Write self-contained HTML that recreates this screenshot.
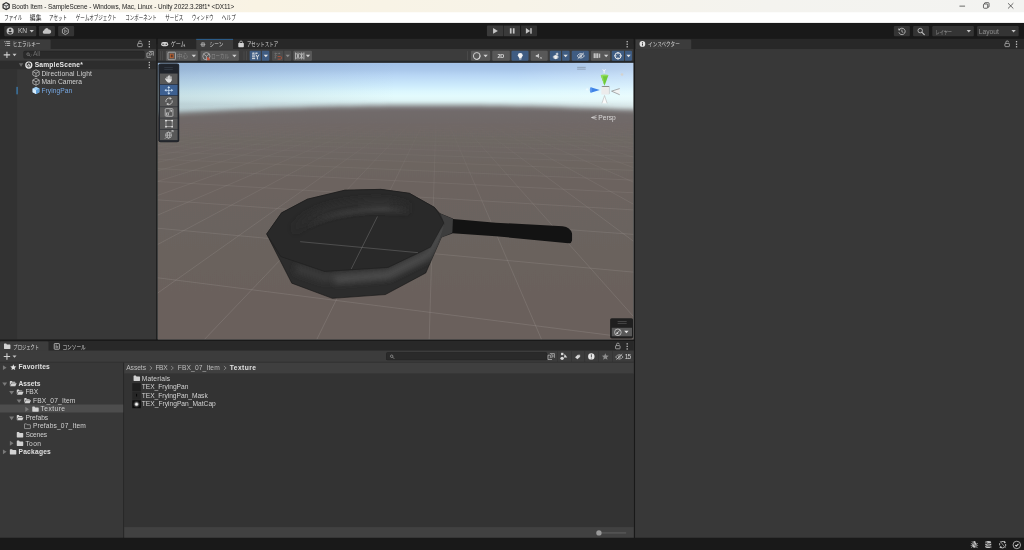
<!DOCTYPE html>
<html lang="ja">
<head>
<meta charset="utf-8">
<title>Booth Item - SampleScene - Unity</title>
<style>
html,body{margin:0;padding:0;width:1024px;height:550px;overflow:hidden;background:#383838}
#root{position:absolute;left:0;top:0;width:1920px;height:1032px;transform-origin:0 0;transform:scale(.533333,.53295);
 font-family:"Liberation Sans",sans-serif;font-size:12px;color:#d2d2d2;overflow:hidden;background:#383838}
.a{position:absolute}
.t{position:absolute;white-space:nowrap;line-height:16px;height:16px}
.j{font-family:"Liberation Sans","Noto Sans CJK JP",sans-serif;transform-origin:0 50%}
.b{font-weight:bold}
svg{overflow:visible}
.btn{position:absolute;background:#585858;border-radius:2px}
.btnb{position:absolute;background:#46607c;border-radius:2px}
.tb{position:absolute;background:#343434;border-radius:2px}
</style>
</head>
<body>
<div id="root">
<div class="a" style="left:0;top:0;width:1920px;height:30px;background:linear-gradient(90deg,#f4f2ec 0,#f9f3e4 25%,#f7f3e8 50%,#f4f3ef 75%,#f3f3f1 100%)"></div>
<svg class="a" style="left:3px;top:3px" width="17" height="17" viewBox="0 0 17 17"><path d="M8.5 0.8 15.4 4.6V12.4L8.5 16.2 1.6 12.4V4.6Z" fill="#2b2b2b"/><path d="M8.5 3.2 12.6 5.6 8.5 8 4.4 5.6Z M3.9 6.6 7.9 9V13.6L3.9 11.2Z M13.1 6.6 9.1 9V13.6L13.1 11.2Z" fill="#e8e8e8"/></svg>
<div class="t" style="left:22.6px;top:4.0px;font-size:12px;letter-spacing:-0.089px;color:#1b1b1b;">Booth Item - SampleScene - Windows, Mac, Linux - Unity 2022.3.28f1* &lt;DX11&gt;</div>
<svg class="a" style="left:1780px;top:0" width="140" height="23" viewBox="0 0 140 23"><g stroke="#1a1a1a" stroke-width="1.2" fill="none"><path d="M19 11.5H29.5"/><rect x="64" y="7.5" width="8" height="8" rx="1.5"/><path d="M66 7.5V6.5Q66 5 67.5 5H73Q74.5 5 74.5 6.5V12Q74.5 13.5 73 13.5H72"/><path d="M110 6 120 16M120 6 110 16"/></g></svg>
<div class="a" style="left:0;top:23px;width:1920px;height:28px;background:#fff"></div>
<div class="t j" style="left:7.5px;top:25px;font-size:12px;color:#1c1c1c;transform:scaleX(.70)">ファイル</div>
<div class="t j" style="left:55.5px;top:25px;font-size:12px;color:#1c1c1c;transform:scaleX(.90)">編集</div>
<div class="t j" style="left:92.3px;top:25px;font-size:12px;color:#1c1c1c;transform:scaleX(.70)">アセット</div>
<div class="t j" style="left:141.5px;top:25px;font-size:12px;color:#1c1c1c;transform:scaleX(.71)">ゲームオブジェクト</div>
<div class="t j" style="left:234.6px;top:25px;font-size:12px;color:#1c1c1c;transform:scaleX(.70)">コンポーネント</div>
<div class="t j" style="left:310.4px;top:25px;font-size:12px;color:#1c1c1c;transform:scaleX(.70)">サービス</div>
<div class="t j" style="left:359.6px;top:25px;font-size:12px;color:#1c1c1c;transform:scaleX(.67)">ウィンドウ</div>
<div class="t j" style="left:415.8px;top:25px;font-size:12px;color:#1c1c1c;transform:scaleX(.73)">ヘルプ</div>
<div class="a" style="left:0;top:43px;width:1920px;height:40px;background:#191919"></div>
<div class="tb" style="left:8.0px;top:48.5px;width:59.5px;height:19.0px;"></div>
<div class="tb" style="left:73.0px;top:48.5px;width:30.0px;height:19.0px;"></div>
<div class="tb" style="left:108.6px;top:48.5px;width:30.0px;height:19.0px;"></div>
<svg class="a" style="left:12px;top:51px" width="14" height="14" viewBox="0 0 14 14"><circle cx="7" cy="7" r="6.6" fill="#c4c4c4"/><circle cx="7" cy="5.2" r="2.2" fill="#383838"/><path d="M2.8 10.6Q7 6.6 11.2 10.6Q7 14 2.8 10.6Z" fill="#383838"/></svg>
<div class="t" style="left:33.6px;top:50.0px;font-size:12.5px;letter-spacing:-0.375px;color:#c4c4c4;">KN</div>
<svg class="a" style="left:55px;top:55.5px" width="9" height="6" viewBox="0 0 9 6"><path d="M0.5 0.5H8.5L4.5 5.2Z" fill="#c4c4c4"/></svg>
<svg class="a" style="left:79px;top:51px" width="18" height="14" viewBox="0 0 18 14"><path d="M4.2 12.5A3.4 3.4 0 0 1 3.8 5.8A4.6 4.6 0 0 1 12.6 4.6A4 4 0 0 1 13.8 12.5Z" fill="#c4c4c4"/></svg>
<svg class="a" style="left:115px;top:50.5px" width="15" height="15" viewBox="0 0 15 15"><path d="M7.5 1 13 4.2V10.8L7.5 14 2 10.8V4.2Z" fill="none" stroke="#c4c4c4" stroke-width="1.4" stroke-linejoin="round"/><path d="M6 4.8 10.2 7.5 6 10.2Z" fill="none" stroke="#c4c4c4" stroke-width="1"/></svg>
<div class="tb" style="left:913.0px;top:48.0px;width:30.6px;height:19.5px;border-radius:2px 0 0 2px;background:#3a3a3a"></div>
<div class="tb" style="left:945.0px;top:48.0px;width:30.3px;height:19.5px;border-radius:0;background:#3a3a3a"></div>
<div class="tb" style="left:976.6px;top:48.0px;width:30.4px;height:19.5px;border-radius:0 2px 2px 0;background:#303030"></div>
<svg class="a" style="left:913px;top:48px" width="94" height="20" viewBox="0 0 94 20"><g fill="#c4c4c4"><path d="M11.5 4.5 20.5 10 11.5 15.5Z"/><rect x="43" y="5" width="3.2" height="10"/><rect x="48.6" y="5" width="3.2" height="10"/><path d="M73 4.5 81 10 73 15.5Z"/><rect x="81.3" y="4.8" width="2.6" height="10.4"/></g></svg>
<div class="tb" style="left:1676.0px;top:49.0px;width:30.0px;height:18.5px;"></div>
<div class="tb" style="left:1712.0px;top:49.0px;width:30.0px;height:18.5px;"></div>
<div class="tb" style="left:1748.0px;top:49.0px;width:78.0px;height:18.5px;"></div>
<div class="tb" style="left:1832.0px;top:49.0px;width:78.0px;height:18.5px;"></div>
<svg class="a" style="left:1683px;top:50.5px" width="16" height="16" viewBox="0 0 16 16"><g fill="none" stroke="#c4c4c4" stroke-width="1.5"><path d="M3.2 4.6A6 6 0 1 1 2.4 9.6"/><path d="M8 4.6V8.4L10.6 10"/></g><path d="M0.8 2.6 5.6 3.2 2.6 7Z" fill="#c4c4c4"/></svg>
<svg class="a" style="left:1719px;top:50.5px" width="16" height="16" viewBox="0 0 16 16"><circle cx="6.4" cy="6.4" r="4.2" fill="none" stroke="#c4c4c4" stroke-width="1.6"/><path d="M9.6 9.6 14 14" stroke="#c4c4c4" stroke-width="2.2" stroke-linecap="round"/></svg>
<div class="t j" style="left:1753.5px;top:50.8px;font-size:11.5px;color:#c4c4c4;opacity:.68;transform:scaleX(.68)">レイヤー</div>
<svg class="a" style="left:1812px;top:56px" width="9" height="6" viewBox="0 0 9 6"><path d="M0.5 0.5H8.5L4.5 5.2Z" fill="#c4c4c4"/></svg>
<div class="t" style="left:1835.0px;top:50.5px;font-size:12.5px;letter-spacing:0.094px;color:#c4c4c4;opacity:.62">Layout</div>
<svg class="a" style="left:1896px;top:56px" width="9" height="6" viewBox="0 0 9 6"><path d="M0.5 0.5H8.5L4.5 5.2Z" fill="#c4c4c4"/></svg>
<div class="a" style="left:0;top:73px;width:293px;height:564px;background:#383838"></div>
<div class="a" style="left:0;top:73px;width:293px;height:18.5px;background:#282828"></div>
<div class="a" style="left:0;top:73.5px;width:95px;height:18px;background:#3c3c3c;border-radius:2px 2px 0 0"></div>
<svg class="a" style="left:8px;top:77px" width="11" height="10" viewBox="0 0 11 10"><g fill="#c4c4c4"><rect x="0" y="0.5" width="2" height="1.6"/><rect x="3" y="0.5" width="8" height="1.6"/><rect x="2" y="4" width="2" height="1.6"/><rect x="5" y="4" width="6" height="1.6"/><rect x="2" y="7.5" width="2" height="1.6"/><rect x="5" y="7.5" width="6" height="1.6"/></g></svg>
<div class="t j" style="left:23.5px;top:75.3px;font-size:11.5px;color:#d2d2d2;transform:scaleX(.75)">ヒエラルキー</div>
<svg class="a" style="left:257px;top:76px" width="11" height="12" viewBox="0 0 11 12"><path d="M3 5.5V3.6A2.6 2.6 0 0 1 8.2 3.2" fill="none" stroke="#c4c4c4" stroke-width="1.3"/><rect x="1.2" y="5.5" width="8.4" height="6" rx="1" fill="none" stroke="#c4c4c4" stroke-width="1.3"/></svg>
<svg class="a" style="left:278px;top:76px" width="4" height="14" viewBox="0 0 4 14"><g fill="#c4c4c4"><rect x="0.8" y="1" width="2.4" height="2.4"/><rect x="0.8" y="5.8" width="2.4" height="2.4"/><rect x="0.8" y="10.6" width="2.4" height="2.4"/></g></svg>
<div class="a" style="left:0;top:91.5px;width:293px;height:22px;background:#3c3c3c"></div>
<svg class="a" style="left:7px;top:96px" width="26" height="14" viewBox="0 0 26 14"><path d="M6 1V13M0 7H12" stroke="#d2d2d2" stroke-width="2" fill="none"/><path d="M16.5 5H24L20.2 9.4Z" fill="#c4c4c4"/></svg>
<div class="a" style="left:44px;top:94.5px;width:227px;height:15px;background:#2a2a2a;border-radius:3px;box-shadow:inset 0 0 0 1px #222"></div>
<svg class="a" style="left:49px;top:97.5px" width="12" height="10" viewBox="0 0 12 10"><circle cx="3.6" cy="3.6" r="2.4" fill="none" stroke="#7a7a7a" stroke-width="1.4"/><path d="M5.4 5.4 8 8" stroke="#7a7a7a" stroke-width="1.6"/><path d="M8.5 4.5H11.5L10 6.3Z" fill="#7a7a7a"/></svg>
<div class="t" style="left:62.0px;top:94.0px;font-size:12.5px;letter-spacing:-0.453px;color:#6e6e6e;">All</div>
<svg class="a" style="left:274px;top:95px" width="15" height="14" viewBox="0 0 15 14"><g fill="none" stroke="#c4c4c4" stroke-width="1.3"><path d="M5 1.5H13.5V9.5"/><path d="M9 12.5H1.5V4.5H5"/><circle cx="8.6" cy="6" r="2.4"/><path d="M6.8 7.8 4.6 10"/></g></svg>
<div class="a" style="left:0;top:113.5px;width:293px;height:16px;background:#2d2d2d"></div>
<div class="a" style="left:0;top:129.5px;width:32px;height:507.5px;background:#323232"></div>
<svg class="a" style="left:35px;top:118px" width="9" height="8" viewBox="0 0 9 8"><path d="M0.3 0.8H8.7L4.5 7.4Z" fill="#6a6a6a"/></svg>
<svg class="a" style="left:47px;top:114.5px" width="14" height="14" viewBox="0 0 14 14"><circle cx="7" cy="7" r="6.8" fill="#e6e6e6"/><path d="M7 2 11 4.3V9L7 11.6 3 9V4.3Z" fill="#2d2d2d"/><path d="M7 4 9.3 5.4 7 6.8 4.7 5.4Z M4.3 6.3 6.6 7.7V10.2L4.3 8.8Z M9.7 6.3 7.4 7.7V10.2L9.7 8.8Z" fill="#e6e6e6"/></svg>
<div class="t b" style="left:65.0px;top:113.5px;font-size:12.5px;letter-spacing:0.375px;color:#e8e8e8;">SampleScene*</div>
<svg class="a" style="left:278px;top:115px" width="4" height="14" viewBox="0 0 4 14"><g fill="#c4c4c4"><rect x="0.8" y="1" width="2.4" height="2.4"/><rect x="0.8" y="5.8" width="2.4" height="2.4"/><rect x="0.8" y="10.6" width="2.4" height="2.4"/></g></svg>
<svg class="a" style="left:60.0px;top:130.0px" width="15" height="15" viewBox="0 0 15 15"><g fill="none" stroke="#c8c8c8" stroke-width="1.3" stroke-linejoin="round"><path d="M7.5 1 13.5 4.2V10.8L7.5 14 1.5 10.8V4.2Z"/><path d="M1.5 4.2 7.5 7.4 13.5 4.2M7.5 7.4V14"/></g></svg>
<div class="t" style="left:77.6px;top:129.5px;font-size:12.5px;letter-spacing:0.316px;">Directional Light</div>
<svg class="a" style="left:60.0px;top:146.0px" width="15" height="15" viewBox="0 0 15 15"><g fill="none" stroke="#c8c8c8" stroke-width="1.3" stroke-linejoin="round"><path d="M7.5 1 13.5 4.2V10.8L7.5 14 1.5 10.8V4.2Z"/><path d="M1.5 4.2 7.5 7.4 13.5 4.2M7.5 7.4V14"/></g></svg>
<div class="t" style="left:77.6px;top:145.5px;font-size:12.5px;letter-spacing:0.117px;">Main Camera</div>
<svg class="a" style="left:60px;top:162px" width="15" height="15" viewBox="0 0 15 15"><path d="M7.5 0.8 13.8 4.1V10.9L7.5 14.2 1.2 10.9V4.1Z" fill="#9fd0f5"/><path d="M1.2 4.1 7.5 7.4V14.2L1.2 10.9Z" fill="#d8ecfb"/><path d="M7.5 7.4 13.8 4.1V10.9L7.5 14.2Z" fill="#5f9fd8"/></svg>
<div class="t" style="left:77.6px;top:161.5px;font-size:12.5px;letter-spacing:0.102px;color:#76a7e2;">FryingPan</div>
<div class="a" style="left:31px;top:162.5px;width:2px;height:14px;background:#3f8fd0"></div>
<div class="a" style="left:293px;top:73px;width:3px;height:566px;background:#191919"></div>
<div class="a" style="left:296px;top:73px;width:892.3px;height:564px;background:#383838"></div>
<div class="a" style="left:296px;top:73px;width:892.3px;height:18.5px;background:#282828"></div>
<div class="a" style="left:368px;top:73px;width:68.7px;height:18.5px;background:#3c3c3c"></div>
<div class="a" style="left:368px;top:73px;width:68.7px;height:1.6px;background:#2c5d8a"></div>
<svg class="a" style="left:302px;top:79px" width="13.5" height="8" viewBox="0 0 15 9"><rect x="0" y="0" width="15" height="9" rx="4.5" fill="#d2d2d2"/><rect x="2.2" y="3.6" width="4.4" height="1.6" fill="#282828"/><circle cx="10.8" cy="4.5" r="1.5" fill="#282828"/></svg>
<div class="t j" style="left:319.5px;top:75.3px;font-size:11.5px;color:#d2d2d2;transform:scaleX(.82)">ゲーム</div>
<svg class="a" style="left:376px;top:78.5px" width="9" height="9" viewBox="0 0 11 11"><circle cx="5.5" cy="5.5" r="5.3" fill="#c8c8c8"/><g stroke="#3c3c3c" stroke-width="1" fill="none"><path d="M0 3.6H11M0 7.4H11M3.6 0V11M7.4 0V11"/></g></svg>
<div class="t j" style="left:393px;top:75.3px;font-size:11.5px;color:#d2d2d2;transform:scaleX(.76)">シーン</div>
<svg class="a" style="left:446px;top:76px" width="12" height="13" viewBox="0 0 12 13"><path d="M3.4 5V3.6A2.6 2.6 0 0 1 8.6 3.6V5" fill="none" stroke="#d2d2d2" stroke-width="1.4"/><rect x="0.8" y="4.6" width="10.4" height="8" rx="1.2" fill="#d2d2d2"/></svg>
<div class="t j" style="left:463px;top:75.3px;font-size:11.5px;color:#d2d2d2;transform:scaleX(.73)">アセットストア</div>
<svg class="a" style="left:1174px;top:76px" width="4" height="14" viewBox="0 0 4 14"><g fill="#c4c4c4"><rect x="0.8" y="1" width="2.4" height="2.4"/><rect x="0.8" y="5.8" width="2.4" height="2.4"/><rect x="0.8" y="10.6" width="2.4" height="2.4"/></g></svg>
<div class="a" style="left:296px;top:91.5px;width:892.3px;height:25.2px;background:#3c3c3c"></div>
<div class="a" style="left:296px;top:114.2px;width:892.3px;height:4px;background:#24272b"></div>
<div class="a" style="left:300px;top:96px;width:1px;height:17px;background:#555"></div><div class="a" style="left:303.5px;top:96px;width:1px;height:17px;background:#555"></div>
<div class="a" style="left:311.0px;top:95px;width:60.3px;height:19px;background:#585858;border-radius:2px 2px 2px 2px"></div>
<div class="a" style="left:376.0px;top:95px;width:72.0px;height:19px;background:#585858;border-radius:2px 2px 2px 2px"></div>
<svg class="a" style="left:314px;top:97px" width="16" height="16" viewBox="0 0 16 16"><rect x="1" y="1" width="14" height="14" rx="1.5" fill="none" stroke="#c4c4c4" stroke-width="1.3"/><rect x="5.3" y="4.6" width="5.4" height="6.8" fill="#5a3a2a" stroke="#c4622e" stroke-width="1.5"/></svg>
<div class="t j" style="left:332.4px;top:96.8px;font-size:11.5px;color:#858585;transform:scaleX(.90)">中心</div>
<svg class="a" style="left:358.5px;top:102px" width="9" height="6" viewBox="0 0 9 6"><path d="M0.4 0.5H8.6L4.5 5.4Z" fill="#d2d2d2"/></svg>
<svg class="a" style="left:378.5px;top:96.5px" width="17" height="17" viewBox="0 0 17 17"><g fill="none" stroke="#c4c4c4" stroke-width="1.3"><circle cx="8" cy="8.5" r="6.8"/><path d="M8 8.5 3 4.6M8 8.5 13 4.6M8 8.5V15"/></g><path d="M9.4 10.2H12.4V12.6H14.2V16H9.4Z" fill="#c8503a"/></svg>
<div class="t j" style="left:396px;top:96.8px;font-size:11.5px;color:#8c8c8c;transform:scaleX(.72)">ローカル</div>
<svg class="a" style="left:435.0px;top:102px" width="9" height="6" viewBox="0 0 9 6"><path d="M0.4 0.5H8.6L4.5 5.4Z" fill="#d2d2d2"/></svg>
<div class="a" style="left:457px;top:96px;width:1px;height:17px;background:#555"></div><div class="a" style="left:462px;top:96px;width:1px;height:17px;background:#555"></div>
<div class="a" style="left:468.3px;top:95px;width:21.0px;height:19px;background:#3f5c82;border-radius:2px 0 0 2px"></div>
<div class="a" style="left:490.6px;top:95px;width:14.7px;height:19px;background:#3f5c82;border-radius:0 2px 2px 0"></div>
<svg class="a" style="left:471.5px;top:98px" width="15" height="14" viewBox="0 0 15 14"><g fill="#ececec"><rect x="0.5" y="1" width="1.8" height="1.6"/><rect x="3.4" y="1" width="1.8" height="1.6"/><rect x="6.3" y="1" width="1.8" height="1.6"/><rect x="9.2" y="1" width="1.8" height="1.6"/><rect x="0.5" y="4.4" width="6" height="1.7"/><rect x="0.5" y="7.8" width="6" height="1.7"/><rect x="0.5" y="11.2" width="6" height="1.7"/><rect x="3" y="0.4" width="1.5" height="3"/><rect x="8.6" y="0.4" width="1.5" height="3"/></g><path d="M8 4.6 10.6 9.4 13.4 4.6M10.6 9.4V13.4" fill="none" stroke="#ececec" stroke-width="1.7"/></svg>
<svg class="a" style="left:493.5px;top:102px" width="9" height="6" viewBox="0 0 9 6"><path d="M0.4 0.5H8.6L4.5 5.4Z" fill="#e4e4e4"/></svg>
<div class="a" style="left:510.0px;top:95px;width:21.4px;height:19px;background:#4c4c4c;border-radius:2px 0 0 2px"></div>
<div class="a" style="left:532.6px;top:95px;width:13.0px;height:19px;background:#4c4c4c;border-radius:0 2px 2px 0"></div>
<svg class="a" style="left:513.5px;top:97.5px" width="16" height="15" viewBox="0 0 16 15"><g stroke="#8c8c8c" stroke-width="1.2" fill="none" stroke-dasharray="1.6 1.3"><path d="M1 2.4H12M1 6.4H5M1 10.4H4M2.4 1V12M9.6 1V4"/></g><path d="M6.6 8H11.6A2.5 2.5 0 0 1 11.6 13H6.6" fill="none" stroke="#a8503a" stroke-width="1.8"/></svg>
<svg class="a" style="left:534.8px;top:102px" width="9" height="6" viewBox="0 0 9 6"><path d="M0.4 0.5H8.6L4.5 5.4Z" fill="#8a8a8a"/></svg>
<div class="a" style="left:550.0px;top:95px;width:35.0px;height:19px;background:#585858;border-radius:2px 2px 2px 2px"></div>
<svg class="a" style="left:553px;top:98px" width="18" height="14" viewBox="0 0 18 14"><g stroke="#c6c6c6" fill="none"><path d="M1.2 0.5V13.5M16.8 0.5V13.5" stroke-width="1.6"/><path d="M3 2 8.4 12M8.4 2 3 12M9.6 2 15 12M15 2 9.6 12" stroke-width="1.5"/><path d="M5.7 0.5V13.5M12.3 0.5V13.5" stroke-width="1.3"/></g></svg>
<svg class="a" style="left:573.0px;top:102px" width="9" height="6" viewBox="0 0 9 6"><path d="M0.4 0.5H8.6L4.5 5.4Z" fill="#d2d2d2"/></svg>
<div class="a" style="left:876px;top:96px;width:1px;height:17px;background:#555"></div>
<div class="a" style="left:882.5px;top:95px;width:36.3px;height:19px;background:#585858;border-radius:2px 2px 2px 2px"></div>
<div class="a" style="left:922.5px;top:95px;width:33.0px;height:19px;background:#585858;border-radius:2px 2px 2px 2px"></div>
<div class="a" style="left:959.0px;top:95px;width:32.0px;height:19px;background:#3f5c82;border-radius:2px 2px 2px 2px"></div>
<div class="a" style="left:994.8px;top:95px;width:32.5px;height:19px;background:#585858;border-radius:2px 2px 2px 2px"></div>
<div class="a" style="left:1031.0px;top:95px;width:21.0px;height:19px;background:#3f5c82;border-radius:2px 0 0 2px"></div>
<div class="a" style="left:1053.5px;top:95px;width:14.5px;height:19px;background:#3f5c82;border-radius:0 2px 2px 0"></div>
<div class="a" style="left:1072.3px;top:95px;width:31.7px;height:19px;background:#3f5c82;border-radius:2px 2px 2px 2px"></div>
<div class="a" style="left:1108.0px;top:95px;width:36.3px;height:19px;background:#585858;border-radius:2px 2px 2px 2px"></div>
<div class="a" style="left:1147.3px;top:95px;width:23.1px;height:19px;background:#3f5c82;border-radius:2px 0 0 2px"></div>
<div class="a" style="left:1171.8px;top:95px;width:13.0px;height:19px;background:#3f5c82;border-radius:0 2px 2px 0"></div>
<svg class="a" style="left:886px;top:97px" width="16" height="16" viewBox="0 0 16 16"><circle cx="8" cy="8" r="6.4" fill="none" stroke="#dadada" stroke-width="1.7"/><path d="M12.6 4.4A6.4 6.4 0 0 1 3.4 12.8 5.4 5.4 0 0 0 12.6 4.4Z" fill="#dadada"/></svg>
<svg class="a" style="left:905.5px;top:102px" width="9" height="6" viewBox="0 0 9 6"><path d="M0.4 0.5H8.6L4.5 5.4Z" fill="#d2d2d2"/></svg>
<div class="t b" style="left:932.6px;top:96.5px;font-size:10.3px;letter-spacing:-0.172px;color:#dcdcdc;">2D</div>
<svg class="a" style="left:969.5px;top:98.5px" width="11" height="13" viewBox="0 0 11 13"><circle cx="5.5" cy="4.8" r="4.5" fill="#f4f4f4"/><path d="M3 7.5H8V10.4H3Z" fill="#f4f4f4"/><rect x="3.4" y="11" width="4.2" height="1.5" fill="#f4f4f4"/></svg>
<svg class="a" style="left:1004px;top:99.5px" width="15" height="12" viewBox="0 0 15 12"><path d="M0.6 3.4H3L6.6 0.6V9L3 6.4H0.6Z" fill="#c8c8c8"/><path d="M8.4 6.6 12 10.4M12 6.8 8.4 10.4" stroke="#c8c8c8" stroke-width="1.2"/></svg>
<svg class="a" style="left:1033.5px;top:97px" width="17" height="16" viewBox="0 0 17 16"><g fill="#f0f0f0"><path d="M2 8.5 8 6 14 8.5 8 11Z"/><path d="M2 11.5 8 9.6 14 11.5 8 14.4Z"/><path d="M10.5 1 11.6 3.4 14 4.4 11.6 5.4 10.5 7.8 9.4 5.4 7 4.4 9.4 3.4Z"/></g></svg>
<svg class="a" style="left:1056.3px;top:102px" width="9" height="6" viewBox="0 0 9 6"><path d="M0.4 0.5H8.6L4.5 5.4Z" fill="#e4e4e4"/></svg>
<svg class="a" style="left:1080.5px;top:98px" width="16" height="13" viewBox="0 0 21 16" preserveAspectRatio="none"><g fill="none" stroke="#f0f0f0" stroke-width="1.7"><path d="M1.5 8.5Q6 3 10.5 3T19.5 8.5Q15 13.5 10.5 13.5T1.5 8.5Z"/><circle cx="10.5" cy="8.3" r="2.4"/><path d="M3 15 18 1.5" stroke-width="1.9"/></g></svg>
<svg class="a" style="left:1112.5px;top:100px" width="13" height="9" viewBox="0 0 13 9"><rect x="0" y="0" width="4" height="9" fill="#c2c2c2"/><rect x="5" y="0" width="4" height="9" fill="#c2c2c2"/><rect x="10.2" y="0.6" width="2.2" height="7.8" fill="#c2c2c2"/></svg>
<svg class="a" style="left:1131.5px;top:102px" width="9" height="6" viewBox="0 0 9 6"><path d="M0.4 0.5H8.6L4.5 5.4Z" fill="#d2d2d2"/></svg>
<svg class="a" style="left:1151.3px;top:97px" width="15.4" height="15.4" viewBox="0 0 17 17"><g fill="none" stroke="#f2f2f2" stroke-width="2"><circle cx="8.5" cy="8.5" r="6.4"/><path d="M8.5 0.6V5.6M8.5 11.4V16.4M0.6 8.5H5.6M11.4 8.5H16.4" stroke-width="1.7"/></g></svg>
<svg class="a" style="left:1173.8px;top:102px" width="9" height="6" viewBox="0 0 9 6"><path d="M0.4 0.5H8.6L4.5 5.4Z" fill="#e4e4e4"/></svg>
<svg class="a" style="left:296.4px;top:117.8px" width="892.1" height="519.7" viewBox="158.1 62.8 475.8 277.0" preserveAspectRatio="none"><defs><linearGradient id="sky" x1="0" y1="62.8" x2="0" y2="339.8" gradientUnits="userSpaceOnUse"><stop offset="0.0000" stop-color="#b4cdea"/><stop offset="0.0029" stop-color="#a2c1e8"/><stop offset="0.0260" stop-color="#abc9ec"/><stop offset="0.0462" stop-color="#b9d7f5"/><stop offset="0.0816" stop-color="#cdebfc"/><stop offset="0.1029" stop-color="#dcf7fe"/><stop offset="0.1199" stop-color="#e3fbfd"/><stop offset="0.1343" stop-color="#e0f6f8"/><stop offset="0.1487" stop-color="#d4e8ea"/><stop offset="1.0000" stop-color="#d4e8ea"/></linearGradient><linearGradient id="gfade" x1="0" y1="104" x2="0" y2="339.8" gradientUnits="userSpaceOnUse"><stop offset="0" stop-color="#fff" stop-opacity="0"/><stop offset="0.06" stop-color="#fff" stop-opacity="0.02"/><stop offset="0.12" stop-color="#fff" stop-opacity="0.1"/><stop offset="0.2" stop-color="#fff" stop-opacity="0.28"/><stop offset="0.32" stop-color="#fff" stop-opacity="0.55"/><stop offset="0.5" stop-color="#fff" stop-opacity="0.8"/><stop offset="1" stop-color="#fff" stop-opacity="1"/></linearGradient><mask id="gm" maskUnits="userSpaceOnUse" x="150" y="100" width="500" height="250"><rect x="150" y="100" width="500" height="250" fill="url(#gfade)"/></mask><clipPath id="vc"><rect x="158.1" y="62.8" width="475.8" height="277.0"/></clipPath><linearGradient id="wall" x1="0" y1="0" x2="1" y2="0"><stop offset="0" stop-color="#262626"/><stop offset="0.35" stop-color="#2e2e2e"/><stop offset="0.6" stop-color="#3b3b3b"/><stop offset="0.85" stop-color="#2f2f2f"/><stop offset="1" stop-color="#3a3a3a"/></linearGradient><radialGradient id="hl" cx="362" cy="222" r="60" gradientUnits="userSpaceOnUse" gradientTransform="translate(362 222) scale(1 0.32) translate(-362 -222)"><stop offset="0.55" stop-color="#4a4a4a" stop-opacity="0"/><stop offset="0.8" stop-color="#4a4a4a" stop-opacity="0.55"/><stop offset="1" stop-color="#4a4a4a" stop-opacity="0"/></radialGradient></defs><rect x="158.1" y="62.8" width="475.8" height="277.0" fill="url(#sky)"/><filter id="gb" x="-10%" y="-10%" width="120%" height="120%"><feGaussianBlur stdDeviation="0 2.8"/></filter><linearGradient id="lsh" x1="158" y1="0" x2="634" y2="0" gradientUnits="userSpaceOnUse"><stop offset="0" stop-color="#5f7888" stop-opacity="0.22"/><stop offset="0.5" stop-color="#5f7888" stop-opacity="0"/><stop offset="0.75" stop-color="#fff" stop-opacity="0"/><stop offset="1" stop-color="#fff" stop-opacity="0.22"/></linearGradient><linearGradient id="gnd" x1="0" y1="105" x2="0" y2="339.8" gradientUnits="userSpaceOnUse"><stop offset="0" stop-color="#726c6d"/><stop offset="0.085" stop-color="#6f6866"/><stop offset="0.32" stop-color="#6c645f"/><stop offset="0.83" stop-color="#6a615c"/><stop offset="1" stop-color="#6a615c"/></linearGradient><rect x="158.1" y="62.8" width="475.8" height="52" fill="url(#lsh)"/><g clip-path="url(#vc)"><path d="M100 400L100 117.64L110 116.92L120 116.21L130 115.53L140 114.87L150 114.23L160 113.62L170 113.02L180 112.45L190 111.90L200 111.37L210 110.87L220 110.38L230 109.92L240 109.48L250 109.06L260 108.67L270 108.29L280 107.94L290 107.61L300 107.30L310 107.02L320 106.75L330 106.51L340 106.29L350 106.09L360 105.92L370 105.76L380 105.63L390 105.52L400 105.43L410 105.37L420 105.32L430 105.30L440 105.30L450 105.32L460 105.37L470 105.43L480 105.52L490 105.63L500 105.76L510 105.92L520 106.09L530 106.29L540 106.51L550 106.75L560 107.02L570 107.30L580 107.61L590 107.94L600 108.29L610 108.67L620 109.06L630 109.48L640 109.92L650 110.38L660 110.87L670 111.37L680 111.90L690 112.45L700 113.02L700 400Z" fill="url(#gnd)" filter="url(#gb)"/></g><g clip-path="url(#vc)"><g mask="url(#gm)"><path d="M100 270.39L700 346.53M100 222.79L700 278.20M100 195.56L700 239.12M100 177.93L700 213.81M100 165.58L700 196.08M100 156.45L700 182.98M100 149.43L700 172.90M100 143.85L700 164.90M100 139.33L700 158.40M100 135.57L700 153.01M100 132.41L700 148.48M100 129.72L700 144.60M100 127.39L700 141.26M100 125.35L700 138.34M100 123.56L700 135.77M100 121.98L700 133.49M100 120.56L700 131.46M100 119.29L700 129.63M100 118.14L700 127.98M100 117.09L700 126.49M100 116.14L700 125.12M100 115.27L700 123.87M100 114.47L700 122.72M100 113.73L700 121.66M100 113.05L700 120.68M100 112.42L700 119.77M100 111.83L700 118.93M100 111.28L700 118.14M100 110.77L700 117.40M100 110.28L700 116.71M100 109.83L700 116.06M100 109.41L700 115.45M100 109.01L700 114.88M100 108.63L700 114.34M100 108.27L700 113.82M100 107.93L700 113.34M100 107.61L700 112.88M100 107.31L700 112.44M100 107.02L700 112.02M100 106.74L700 111.63M100 106.48L700 111.25M100 106.23L700 110.89M100 105.99L700 110.55M100 105.76L700 110.22M100 105.54L700 109.90M100 105.33L700 109.60M100 105.13L700 109.31M100 104.94L700 109.03M100 104.75L700 108.77M100 104.57L700 108.51M100 104.40L700 108.26M100 104.23L700 108.03M100 104.07L700 107.80M100 103.92L700 107.58M100 103.77L700 107.36M100 103.63L700 107.16M100 103.49L700 106.96M100 103.36L700 106.77M100 103.23L700 106.58M100 103.10L700 106.40M100 102.98L700 106.23M100 102.87L700 106.06M194.48 104L-6697.83 345M198.39 104L-6582.88 345M202.29 104L-6467.93 345M206.20 104L-6352.97 345M210.10 104L-6238.02 345M214.01 104L-6123.07 345M217.92 104L-6008.12 345M221.82 104L-5893.16 345M225.73 104L-5778.21 345M229.63 104L-5663.26 345M233.54 104L-5548.31 345M237.45 104L-5433.35 345M241.35 104L-5318.40 345M245.26 104L-5203.45 345M249.16 104L-5088.50 345M253.07 104L-4973.54 345M256.98 104L-4858.59 345M260.88 104L-4743.64 345M264.79 104L-4628.68 345M268.69 104L-4513.73 345M272.60 104L-4398.78 345M276.51 104L-4283.83 345M280.41 104L-4168.87 345M284.32 104L-4053.92 345M288.22 104L-3938.97 345M292.13 104L-3824.02 345M296.04 104L-3709.06 345M299.94 104L-3594.11 345M303.85 104L-3479.16 345M307.75 104L-3364.21 345M311.66 104L-3249.25 345M315.57 104L-3134.30 345M319.47 104L-3019.35 345M323.38 104L-2904.40 345M327.28 104L-2789.44 345M331.19 104L-2674.49 345M335.10 104L-2559.54 345M339.00 104L-2444.58 345M342.91 104L-2329.63 345M346.81 104L-2214.68 345M350.72 104L-2099.73 345M354.63 104L-1984.77 345M358.53 104L-1869.82 345M362.44 104L-1754.87 345M366.34 104L-1639.92 345M370.25 104L-1524.96 345M374.16 104L-1410.01 345M378.06 104L-1295.06 345M381.97 104L-1180.11 345M385.87 104L-1065.15 345M389.78 104L-950.20 345M393.69 104L-835.25 345M397.59 104L-720.30 345M401.50 104L-605.34 345M405.40 104L-490.39 345M409.31 104L-375.44 345M413.22 104L-260.48 345M417.12 104L-145.53 345M421.03 104L-30.58 345M424.93 104L84.37 345M428.84 104L199.33 345M432.75 104L314.28 345M436.65 104L429.23 345M440.56 104L544.18 345M444.46 104L659.14 345M448.37 104L774.09 345M452.28 104L889.04 345M456.18 104L1003.99 345M460.09 104L1118.95 345M463.99 104L1233.90 345M467.90 104L1348.85 345M471.81 104L1463.81 345M475.71 104L1578.76 345M479.62 104L1693.71 345M483.52 104L1808.66 345M487.43 104L1923.62 345M491.34 104L2038.57 345M495.24 104L2153.52 345M499.15 104L2268.47 345M503.05 104L2383.43 345M506.96 104L2498.38 345M510.86 104L2613.33 345M514.77 104L2728.28 345M518.68 104L2843.24 345M522.58 104L2958.19 345M526.49 104L3073.14 345M530.39 104L3188.09 345M534.30 104L3303.05 345M538.21 104L3418.00 345M542.11 104L3532.95 345M546.02 104L3647.91 345M549.92 104L3762.86 345M553.83 104L3877.81 345M557.74 104L3992.76 345M561.64 104L4107.72 345M565.55 104L4222.67 345M569.45 104L4337.62 345M573.36 104L4452.57 345M577.27 104L4567.53 345M581.17 104L4682.48 345M585.08 104L4797.43 345M588.98 104L4912.38 345M592.89 104L5027.34 345M596.80 104L5142.29 345M600.70 104L5257.24 345M604.61 104L5372.19 345M608.51 104L5487.15 345M612.42 104L5602.10 345M616.33 104L5717.05 345M620.23 104L5832.01 345M624.14 104L5946.96 345M628.04 104L6061.91 345M631.95 104L6176.86 345M635.86 104L6291.82 345M639.76 104L6406.77 345M643.67 104L6521.72 345M647.57 104L6636.67 345M651.48 104L6751.63 345M655.39 104L6866.58 345M659.29 104L6981.53 345" stroke="#a8a09a" stroke-width="0.5" fill="none" opacity="0.55"/></g></g><linearGradient id="hg1" x1="288" y1="0" x2="416" y2="0" gradientUnits="userSpaceOnUse"><stop offset="0" stop-color="#2e2e2e" stop-opacity="0"/><stop offset="0.3" stop-color="#2f2f2f" stop-opacity="1"/><stop offset="0.8" stop-color="#303030" stop-opacity="1"/><stop offset="1" stop-color="#2e2e2e" stop-opacity="0"/></linearGradient><linearGradient id="hg2" x1="304" y1="0" x2="412" y2="0" gradientUnits="userSpaceOnUse"><stop offset="0" stop-color="#444" stop-opacity="0"/><stop offset="0.35" stop-color="#464646" stop-opacity="0.8"/><stop offset="0.75" stop-color="#4a4a4a" stop-opacity="1"/><stop offset="1" stop-color="#444" stop-opacity="0"/></linearGradient><clipPath id="co"><polygon points="266.9,233.9 281.8,212.8 307.6,199.1 345.1,190.1 381.1,189.3 409.6,193.2 434.6,207.3 440.1,213.5 453.4,219.0 453.7,230.0 452.6,233.1 441.7,237.0 426.0,272.9 385.6,294.5 332.6,298.3 292.0,283.1"/></clipPath><clipPath id="ci"><polygon points="266.9,233.9 281.8,212.8 307.6,199.1 345.1,190.1 381.1,189.3 409.6,193.2 434.6,207.3 438.5,212.8 444.0,222.9 430.7,247.2 388.3,267.4 324.8,271.4 281.0,256.5"/></clipPath><filter id="bl" x="-20%" y="-50%" width="140%" height="200%"><feGaussianBlur stdDeviation="3"/></filter><filter id="bl3" x="-20%" y="-50%" width="140%" height="200%"><feGaussianBlur stdDeviation="1.5"/></filter><filter id="bl2" x="-20%" y="-50%" width="140%" height="200%"><feGaussianBlur stdDeviation="2.2"/></filter><polygon points="266.9,233.9 281.8,212.8 307.6,199.1 345.1,190.1 381.1,189.3 409.6,193.2 434.6,207.3 440.1,213.5 453.4,219.0 453.7,230.0 452.6,233.1 441.7,237.0 426.0,272.9 385.6,294.5 332.6,298.3 292.0,283.1" fill="#2c2c2c" stroke="#141414" stroke-width="0.6"/><g clip-path="url(#co)"><path d="M296 268 325 277.5 388 273.5 428 254 446 226" fill="none" stroke="#3a3a3a" stroke-width="9" filter="url(#bl)"/><path d="M335 280 388 275 428 255 446 226" fill="none" stroke="#4e4e4e" stroke-width="7" filter="url(#bl)"/><path d="M440 212 454 219V232L442 237 437 246 445 224Z" fill="#3d3d3d"/></g><polygon points="266.9,233.9 281.8,212.8 307.6,199.1 345.1,190.1 381.1,189.3 409.6,193.2 434.6,207.3 438.5,212.8 444.0,222.9 430.7,247.2 388.3,267.4 324.8,271.4 281.0,256.5" fill="#292929" stroke="#161616" stroke-width="0.4"/><g clip-path="url(#ci)"><path d="M292 232Q306 214 344 207.5T410 209" fill="none" stroke="url(#hg1)" stroke-width="11" filter="url(#bl)"/><path d="M308 228Q320 217.5 346 213T392 209.8Q402 210 409 212.6" fill="none" stroke="url(#hg2)" stroke-width="3" filter="url(#bl2)"/></g><path d="M300.4 241.6 418.2 252.6M377.7 216.4 351.4 269" stroke="#7a7a7a" stroke-width="0.45" fill="none"/><path d="M453.2 218.9 496 222.6 563 226.1Q570.5 226.8 572.3 233.4V240.4Q571.6 243.6 568.6 243.1L496 236.2 452.6 233.2Z" fill="#131313"/></svg>
<div class="a" style="left:298px;top:120px;width:36.5px;height:145.5px;background:#20242b;border-radius:3px;box-shadow:0 0 0 1px #1b1d21"></div>
<div class="a" style="left:308px;top:125.5px;width:16px;height:1.6px;background:#3e4654"></div><div class="a" style="left:308px;top:129.5px;width:16px;height:1.6px;background:#3e4654"></div>
<div class="a" style="left:300px;top:138.4px;width:32.6px;height:19.6px;background:#585858"></div>
<div class="a" style="left:300px;top:159.4px;width:32.6px;height:19.6px;background:#3d6091"></div>
<div class="a" style="left:300px;top:180.4px;width:32.6px;height:19.6px;background:#585858"></div>
<div class="a" style="left:300px;top:201.4px;width:32.6px;height:19.6px;background:#585858"></div>
<div class="a" style="left:300px;top:222.4px;width:32.6px;height:19.6px;background:#585858"></div>
<div class="a" style="left:300px;top:243.4px;width:32.6px;height:19.6px;background:#585858"></div>
<svg class="a" style="left:308px;top:140px" width="17" height="16" viewBox="0 0 17 16"><g stroke="#e0e0e0" stroke-width="1.9" stroke-linecap="round" fill="none"><path d="M5.2 4.4V10M7.7 2.4V10M10.2 2.2V10M12.7 3.8V10M2.4 8 5 11.6"/></g><path d="M4.3 8.6H13.6V10.6Q13.6 15.2 9.4 15.2H8.4Q5.8 15.2 4.3 12Z" fill="#e0e0e0"/></svg>
<svg class="a" style="left:307.8px;top:160.7px" width="17" height="17" viewBox="0 0 17 17"><g fill="#c9def4"><path d="M8.5 0.3 11.3 4H5.7Z M8.5 16.7 11.3 13H5.7Z M0.3 8.5 4 5.7V11.3Z M16.7 8.5 13 5.7V11.3Z"/><rect x="7.8" y="3.4" width="1.4" height="10.2"/><rect x="3.4" y="7.8" width="10.2" height="1.4"/></g></svg>
<svg class="a" style="left:308.5px;top:181.5px" width="16" height="16" viewBox="0 0 16 16"><g fill="none" stroke="#cfcfcf" stroke-width="1.5"><path d="M2.2 9.6A6 6 0 0 1 10.6 2.6"/><path d="M13.8 6.4A6 6 0 0 1 5.4 13.4"/></g><path d="M9.2 0.2 13.4 2.8 9.4 5.2Z M6.8 15.8 2.6 13.2 6.6 10.8Z" fill="#cfcfcf"/></svg>
<svg class="a" style="left:308.5px;top:202.5px" width="16" height="16" viewBox="0 0 16 16"><g fill="none" stroke="#cfcfcf" stroke-width="1.3"><rect x="0.8" y="0.8" width="14.4" height="14.4" rx="1.6"/><rect x="3" y="9" width="4" height="4"/><path d="M7.6 8.4 12.4 3.6M8.6 3.4H12.6V7.4"/></g></svg>
<svg class="a" style="left:308.5px;top:223.5px" width="16" height="16" viewBox="0 0 16 16"><rect x="2.2" y="2.2" width="11.6" height="11.6" fill="none" stroke="#cfcfcf" stroke-width="1.1"/><g fill="#ececec"><circle cx="2.2" cy="2.2" r="1.6"/><circle cx="13.8" cy="2.2" r="1.6"/><circle cx="2.2" cy="13.8" r="1.6"/><circle cx="13.8" cy="13.8" r="1.6"/></g></svg>
<svg class="a" style="left:307.5px;top:244px" width="18" height="17" viewBox="0 0 18 17"><g fill="none" stroke="#cfcfcf" stroke-width="1.2"><circle cx="8" cy="9.6" r="5.6"/><ellipse cx="8" cy="9.6" rx="2.3" ry="5.6"/><path d="M2.4 9.6H13.6"/><path d="M12.4 5 16.4 1M13.4 0.8H16.6V4M1 16.4 3.6 13.8" /></g></svg>
<svg class="a" style="left:1068.8px;top:120.1px" width="120.0" height="108.8" viewBox="570 64 64 58" preserveAspectRatio="none"><path d="M577 67.4H585.6M577 69.2H585.6" stroke="#8593a8" stroke-width="0.75"/><path d="M600.7 75.6H608.2L604.4 85.8Z" fill="#6fc93a"/><path d="M600.7 75.6 604.4 85.8 602.6 75.6Z" fill="#8fdc5c"/><ellipse cx="604.45" cy="75.5" rx="3.75" ry="0.9" fill="#8fdc5c"/><path d="M590.6 87.2V92.8L599.7 90Z" fill="#3f83e6"/><ellipse cx="590.7" cy="90" rx="1" ry="2.8" fill="#5f9af0"/><rect x="601.2" y="87" width="7.6" height="7.6" fill="#ececec"/><path d="M601.2 87 602.4 86H609.4L608.8 87Z" fill="#8c8c8c"/><path d="M608.8 87 609.4 86V93.6L608.8 94.6Z" fill="#bdbdbd"/><path d="M611.4 91.2 619.6 88.6V94.8Z" fill="#f2f2f2" opacity="0.9"/><path d="M611.4 91.2 619.6 88.6M611.4 91.2 619.6 94.8" stroke="#8a8a8a" stroke-width="0.7" fill="none"/><path d="M604.4 95.6 607 103.4H601.8Z" fill="#fafafa"/><path d="M604.4 95.6 601.8 103.4M604.4 95.6 607 103.4" stroke="#b9b9b9" stroke-width="0.6" fill="none"/><path d="M602.6 69.3 604 71.2 605.4 69.3M604 71.2V73.3" stroke="#fff" stroke-width="0.8" fill="none"/><circle cx="621.9" cy="74.6" r="1.3" fill="#d8cfc4" opacity="0.8"/><circle cx="587" cy="89.4" r="1.2" fill="#fff" opacity="0.5"/><path d="M596.4 115.6 591.4 117.6 596.4 119.6M596.4 117.6H591.4" stroke="#ececec" stroke-width="0.6" fill="none" opacity="0.9"/></svg>
<div class="t" style="left:1121.8px;top:212.5px;font-size:12.5px;letter-spacing:-0.014px;color:#f0f0f0;opacity:.8">Persp</div>
<div class="a" style="left:1144px;top:597px;width:43px;height:38px;background:#1f1f1f;border-radius:3px"></div>
<div class="a" style="left:1158px;top:602.6px;width:16.5px;height:1.3px;background:#666"></div><div class="a" style="left:1158px;top:606px;width:16.5px;height:1.3px;background:#666"></div>
<div class="a" style="left:1147px;top:614.5px;width:37.5px;height:16.5px;background:#585858"></div>
<svg class="a" style="left:1150.5px;top:615.5px" width="15" height="15" viewBox="0 0 15 15"><circle cx="7.5" cy="7.5" r="6.2" fill="none" stroke="#d8d8d8" stroke-width="1.3"/><path d="M4 11.5 11.5 3.5" stroke="#d8d8d8" stroke-width="1.5"/><circle cx="6.4" cy="9" r="1.8" fill="#d8d8d8"/></svg>
<svg class="a" style="left:1170.0px;top:620px" width="9" height="6" viewBox="0 0 9 6"><path d="M0.4 0.5H8.6L4.5 5.4Z" fill="#e4e4e4"/></svg>
<div class="a" style="left:1188.3px;top:73px;width:3px;height:940px;background:#191919"></div>
<div class="a" style="left:0;top:637px;width:1189px;height:3.2px;background:#191919"></div>
<div class="a" style="left:1191px;top:73px;width:729px;height:937px;background:#383838"></div>
<div class="a" style="left:1191px;top:73px;width:729px;height:18.5px;background:#282828"></div>
<div class="a" style="left:1191.5px;top:73.5px;width:104px;height:18px;background:#3c3c3c;border-radius:2px 2px 0 0"></div>
<svg class="a" style="left:1199px;top:77px" width="11" height="11" viewBox="0 0 11 11"><circle cx="5.5" cy="5.5" r="5.4" fill="#e4e4e4"/><rect x="4.7" y="4.6" width="1.7" height="4" fill="#282828"/><rect x="4.7" y="2.2" width="1.7" height="1.6" fill="#282828"/></svg>
<div class="t j" style="left:1214.8px;top:75.3px;font-size:11.5px;color:#d2d2d2;transform:scaleX(.755)">インスペクター</div>
<svg class="a" style="left:1883px;top:76px" width="11" height="12" viewBox="0 0 11 12"><path d="M3 5.5V3.6A2.6 2.6 0 0 1 8.2 3.2" fill="none" stroke="#c4c4c4" stroke-width="1.3"/><rect x="1.2" y="5.5" width="8.4" height="6" rx="1" fill="none" stroke="#c4c4c4" stroke-width="1.3"/></svg>
<svg class="a" style="left:1904px;top:76px" width="4" height="14" viewBox="0 0 4 14"><g fill="#c4c4c4"><rect x="0.8" y="1" width="2.4" height="2.4"/><rect x="0.8" y="5.8" width="2.4" height="2.4"/><rect x="0.8" y="10.6" width="2.4" height="2.4"/></g></svg>
<div class="a" style="left:0;top:640px;width:1188.3px;height:370px;background:#383838"></div>
<div class="a" style="left:0;top:640px;width:1188.3px;height:18.3px;background:#282828"></div>
<div class="a" style="left:0;top:640.5px;width:90.5px;height:18px;background:#3c3c3c;border-radius:2px 2px 0 0"></div>
<svg class="a" style="left:6.5px;top:644.0px" width="13" height="11.5" viewBox="0 0 14 12"><path d="M0.5 1.6Q0.5 0.6 1.5 0.6H5L6.4 2.4H12.5Q13.5 2.4 13.5 3.4V10.4Q13.5 11.4 12.5 11.4H1.5Q0.5 11.4 0.5 10.4Z" fill="#d2d2d2"/></svg>
<div class="t j" style="left:24.5px;top:642.3px;font-size:11.5px;color:#d2d2d2;transform:scaleX(.70)">プロジェクト</div>
<svg class="a" style="left:101px;top:643.5px" width="11" height="12" viewBox="0 0 11 12"><rect x="0.7" y="0.7" width="9.6" height="10.6" rx="1" fill="none" stroke="#d2d2d2" stroke-width="1.4"/><path d="M3 3.6H6M3 6H8M3 8.4H8" stroke="#d2d2d2" stroke-width="1.1"/></svg>
<div class="t j" style="left:116.8px;top:642.3px;font-size:11.5px;color:#d2d2d2;transform:scaleX(.76)">コンソール</div>
<svg class="a" style="left:1153px;top:643px" width="11" height="12" viewBox="0 0 11 12"><path d="M3 5.5V3.6A2.6 2.6 0 0 1 8.2 3.2" fill="none" stroke="#c4c4c4" stroke-width="1.3"/><rect x="1.2" y="5.5" width="8.4" height="6" rx="1" fill="none" stroke="#c4c4c4" stroke-width="1.3"/></svg>
<svg class="a" style="left:1174px;top:643px" width="4" height="14" viewBox="0 0 4 14"><g fill="#c4c4c4"><rect x="0.8" y="1" width="2.4" height="2.4"/><rect x="0.8" y="5.8" width="2.4" height="2.4"/><rect x="0.8" y="10.6" width="2.4" height="2.4"/></g></svg>
<div class="a" style="left:0;top:658.3px;width:1188.3px;height:21.2px;background:#3c3c3c"></div>
<svg class="a" style="left:7px;top:662px" width="26" height="14" viewBox="0 0 26 14"><path d="M6 1V13M0 7H12" stroke="#d2d2d2" stroke-width="2" fill="none"/><path d="M16.5 5H24L20.2 9.4Z" fill="#c4c4c4"/></svg>
<div class="a" style="left:724px;top:661px;width:301.5px;height:15px;background:#2a2a2a;border-radius:3px;box-shadow:inset 0 0 0 1px #222"></div>
<svg class="a" style="left:731px;top:664.5px" width="9" height="9" viewBox="0 0 9 9"><circle cx="3.4" cy="3.4" r="2.3" fill="none" stroke="#9a9a9a" stroke-width="1.4"/><path d="M5.2 5.2 8 8" stroke="#9a9a9a" stroke-width="1.6"/></svg>
<svg class="a" style="left:1026px;top:661.5px" width="15" height="14" viewBox="0 0 15 14"><g fill="none" stroke="#c4c4c4" stroke-width="1.3"><path d="M5 1.5H13.5V9.5"/><path d="M9 12.5H1.5V4.5H5"/><circle cx="8.6" cy="6" r="2.4"/><path d="M6.8 7.8 4.6 10"/></g></svg>
<div class="a" style="left:1045.0px;top:659px;width:1px;height:20px;background:#303030"></div>
<div class="a" style="left:1070.5px;top:659px;width:1px;height:20px;background:#303030"></div>
<div class="a" style="left:1096.0px;top:659px;width:1px;height:20px;background:#303030"></div>
<div class="a" style="left:1121.5px;top:659px;width:1px;height:20px;background:#303030"></div>
<div class="a" style="left:1147.5px;top:659px;width:1px;height:20px;background:#303030"></div>
<svg class="a" style="left:1049px;top:661px" width="16" height="16" viewBox="0 0 16 16"><g fill="#d8d8d8"><circle cx="5" cy="11.4" r="3.2"/><rect x="3" y="1" width="4.4" height="4.4"/><path d="M9.6 3.4 14.6 10H8.4Z"/></g></svg>
<svg class="a" style="left:1077px;top:663.5px" width="12" height="11" viewBox="0 0 16 15"><path d="M1.6 8.6 8.6 2.4 14.4 2.2 14.6 7.6 7.4 13.8Z" fill="#d8d8d8"/><circle cx="11.8" cy="5" r="1.1" fill="#3c3c3c"/></svg>
<svg class="a" style="left:1102.3px;top:662.3px" width="13.4" height="13.4" viewBox="0 0 17 17"><circle cx="8.5" cy="8.5" r="7.6" fill="#e6e6e6"/><rect x="7.5" y="3.6" width="2" height="6.4" fill="#3c3c3c"/><rect x="7.5" y="11.4" width="2" height="2" fill="#3c3c3c"/></svg>
<svg class="a" style="left:1128px;top:662px" width="14" height="14" viewBox="0 0 14 14"><path d="M7 0.6 8.9 5 13.6 5.4 10 8.5 11.1 13.2 7 10.7 2.9 13.2 4 8.5 0.4 5.4 5.1 5Z" fill="#8c8c8c"/></svg>
<svg class="a" style="left:1152.5px;top:662.5px" width="16.5" height="13" viewBox="0 0 21 16"><g fill="none" stroke="#d8d8d8" stroke-width="1.4"><path d="M1.5 8.5Q6 3 10.5 3T19.5 8.5Q15 13.5 10.5 13.5T1.5 8.5Z"/><circle cx="10.5" cy="8.3" r="2.4"/><path d="M3.5 14.5 17.5 1.5" stroke-width="1.6"/></g></svg>
<div class="t" style="left:1171.4px;top:660.5px;font-size:12.5px;letter-spacing:-1.706px;">15</div>
<div class="a" style="left:0;top:679.5px;width:231px;height:330px;background:#383838"></div>
<div class="a" style="left:231px;top:679.5px;width:2.4px;height:330px;background:#262626"></div>
<svg class="a" style="left:5.2px;top:684.5px" width="7.6" height="9.6" viewBox="0 0 7 9"><path d="M0.4 0.2 6.8 4.5 0.4 8.8Z" fill="#7a7a7a"/></svg>
<svg class="a" style="left:19px;top:683.0px" width="12" height="12" viewBox="0 0 14 14"><path d="M7 0.6 8.9 5 13.6 5.4 10 8.5 11.1 13.2 7 10.7 2.9 13.2 4 8.5 0.4 5.4 5.1 5Z" fill="#e2e2e2"/></svg>
<div class="t b" style="left:34.7px;top:681.0px;font-size:12.5px;letter-spacing:0.388px;color:#e0e0e0;">Favorites</div>
<div class="a" style="left:0;top:758.8px;width:231px;height:15.6px;background:#4d4d4d"></div>
<svg class="a" style="left:4.2px;top:716.6px" width="9.6" height="7.6" viewBox="0 0 9 7"><path d="M0.2 0.4H8.8L4.5 6.8Z" fill="#7a7a7a"/></svg>
<svg class="a" style="left:18.1px;top:713.6px" width="13.6" height="11.5" viewBox="0 0 15 12"><path d="M0.5 1.6Q0.5 0.6 1.5 0.6H4.6L6 2.4H11Q12 2.4 12 3.4V4.4H3.6L0.5 10.6Z" fill="#d2d2d2"/><path d="M1 11.4 4 5.4H14.6L11.8 11.4Z" fill="#d2d2d2"/></svg>
<div class="t b" style="left:34.7px;top:711.6px;font-size:12.5px;letter-spacing:0.080px;color:#e0e0e0;">Assets</div>
<svg class="a" style="left:17.1px;top:732.6px" width="9.6" height="7.6" viewBox="0 0 9 7"><path d="M0.2 0.4H8.8L4.5 6.8Z" fill="#7a7a7a"/></svg>
<svg class="a" style="left:31.0px;top:729.6px" width="13.6" height="11.5" viewBox="0 0 15 12"><path d="M0.5 1.6Q0.5 0.6 1.5 0.6H4.6L6 2.4H11Q12 2.4 12 3.4V4.4H3.6L0.5 10.6Z" fill="#d2d2d2"/><path d="M1 11.4 4 5.4H14.6L11.8 11.4Z" fill="#d2d2d2"/></svg>
<div class="t" style="left:47.6px;top:727.6px;font-size:12.5px;letter-spacing:-0.256px;color:#d2d2d2;">FBX</div>
<svg class="a" style="left:31.4px;top:748.6px" width="9.6" height="7.6" viewBox="0 0 9 7"><path d="M0.2 0.4H8.8L4.5 6.8Z" fill="#7a7a7a"/></svg>
<svg class="a" style="left:45.3px;top:745.6px" width="13.6" height="11.5" viewBox="0 0 15 12"><path d="M0.5 1.6Q0.5 0.6 1.5 0.6H4.6L6 2.4H11Q12 2.4 12 3.4V4.4H3.6L0.5 10.6Z" fill="#d2d2d2"/><path d="M1 11.4 4 5.4H14.6L11.8 11.4Z" fill="#d2d2d2"/></svg>
<div class="t" style="left:61.9px;top:743.6px;font-size:12.5px;letter-spacing:0.306px;color:#d2d2d2;">FBX_07_Item</div>
<svg class="a" style="left:46.6px;top:763.1px" width="7.6" height="9.6" viewBox="0 0 7 9"><path d="M0.4 0.2 6.8 4.5 0.4 8.8Z" fill="#7a7a7a"/></svg>
<svg class="a" style="left:59.5px;top:761.6px" width="13" height="11.5" viewBox="0 0 14 12"><path d="M0.5 1.6Q0.5 0.6 1.5 0.6H5L6.4 2.4H12.5Q13.5 2.4 13.5 3.4V10.4Q13.5 11.4 12.5 11.4H1.5Q0.5 11.4 0.5 10.4Z" fill="#d2d2d2"/></svg>
<div class="t" style="left:76.1px;top:759.6px;font-size:12.5px;letter-spacing:0.800px;color:#d2d2d2;">Texture</div>
<svg class="a" style="left:17.1px;top:780.6px" width="9.6" height="7.6" viewBox="0 0 9 7"><path d="M0.2 0.4H8.8L4.5 6.8Z" fill="#7a7a7a"/></svg>
<svg class="a" style="left:31.0px;top:777.6px" width="13.6" height="11.5" viewBox="0 0 15 12"><path d="M0.5 1.6Q0.5 0.6 1.5 0.6H4.6L6 2.4H11Q12 2.4 12 3.4V4.4H3.6L0.5 10.6Z" fill="#d2d2d2"/><path d="M1 11.4 4 5.4H14.6L11.8 11.4Z" fill="#d2d2d2"/></svg>
<div class="t" style="left:47.6px;top:775.6px;font-size:12.5px;letter-spacing:-0.049px;color:#d2d2d2;">Prefabs</div>
<svg class="a" style="left:45.3px;top:793.6px" width="13" height="11.5" viewBox="0 0 14 12"><path d="M1 1.8Q1 1.2 1.6 1.2H5L6.4 3H12.4Q13 3 13 3.6V10.2Q13 10.8 12.4 10.8H1.6Q1 10.8 1 10.2Z" fill="none" stroke="#c4c4c4" stroke-width="1.2"/></svg>
<div class="t" style="left:61.9px;top:791.6px;font-size:12.5px;letter-spacing:0.271px;color:#d2d2d2;">Prefabs_07_Item</div>
<svg class="a" style="left:31.0px;top:809.6px" width="13" height="11.5" viewBox="0 0 14 12"><path d="M0.5 1.6Q0.5 0.6 1.5 0.6H5L6.4 2.4H12.5Q13.5 2.4 13.5 3.4V10.4Q13.5 11.4 12.5 11.4H1.5Q0.5 11.4 0.5 10.4Z" fill="#d2d2d2"/></svg>
<div class="t" style="left:47.6px;top:807.6px;font-size:12.5px;letter-spacing:-0.161px;color:#d2d2d2;">Scenes</div>
<svg class="a" style="left:18.1px;top:827.1px" width="7.6" height="9.6" viewBox="0 0 7 9"><path d="M0.4 0.2 6.8 4.5 0.4 8.8Z" fill="#7a7a7a"/></svg>
<svg class="a" style="left:31.0px;top:825.6px" width="13" height="11.5" viewBox="0 0 14 12"><path d="M0.5 1.6Q0.5 0.6 1.5 0.6H5L6.4 2.4H12.5Q13.5 2.4 13.5 3.4V10.4Q13.5 11.4 12.5 11.4H1.5Q0.5 11.4 0.5 10.4Z" fill="#d2d2d2"/></svg>
<div class="t" style="left:47.6px;top:823.6px;font-size:12.5px;letter-spacing:0.664px;color:#d2d2d2;">Toon</div>
<svg class="a" style="left:5.2px;top:843.1px" width="7.6" height="9.6" viewBox="0 0 7 9"><path d="M0.4 0.2 6.8 4.5 0.4 8.8Z" fill="#7a7a7a"/></svg>
<svg class="a" style="left:18.1px;top:841.6px" width="13" height="11.5" viewBox="0 0 14 12"><path d="M0.5 1.6Q0.5 0.6 1.5 0.6H5L6.4 2.4H12.5Q13.5 2.4 13.5 3.4V10.4Q13.5 11.4 12.5 11.4H1.5Q0.5 11.4 0.5 10.4Z" fill="#d2d2d2"/></svg>
<div class="t b" style="left:34.7px;top:839.6px;font-size:12.5px;letter-spacing:0.416px;color:#e0e0e0;">Packages</div>
<div class="a" style="left:233.4px;top:679.5px;width:955px;height:309.5px;background:#333"></div>
<div class="a" style="left:233.4px;top:679.5px;width:955px;height:22px;background:#3f3f3f"></div>
<div class="a" style="left:0;top:678.6px;width:1188.3px;height:1.2px;background:#2c2c2c"></div>
<div class="a" style="left:233.4px;top:701.3px;width:955px;height:1px;background:#2e2e2e"></div>
<div class="t" style="left:236.6px;top:681.5px;font-size:12.5px;letter-spacing:-0.063px;color:#bdbdbd;">Assets</div>
<div class="t" style="left:291.4px;top:681.5px;font-size:12.5px;letter-spacing:-0.706px;color:#bdbdbd;">FBX</div>
<div class="t" style="left:333.4px;top:681.5px;font-size:12.5px;letter-spacing:0.216px;color:#bdbdbd;">FBX_07_Item</div>
<div class="t b" style="left:430.9px;top:681.5px;font-size:12.5px;letter-spacing:0.811px;color:#e0e0e0;">Texture</div>
<svg class="a" style="left:279.5px;top:685.5px" width="6" height="9" viewBox="0 0 6 9"><path d="M0.8 0.8 5 4.5 0.8 8.2" fill="none" stroke="#a8a8a8" stroke-width="1.2"/></svg>
<svg class="a" style="left:320.0px;top:685.5px" width="6" height="9" viewBox="0 0 6 9"><path d="M0.8 0.8 5 4.5 0.8 8.2" fill="none" stroke="#a8a8a8" stroke-width="1.2"/></svg>
<svg class="a" style="left:418.5px;top:685.5px" width="6" height="9" viewBox="0 0 6 9"><path d="M0.8 0.8 5 4.5 0.8 8.2" fill="none" stroke="#a8a8a8" stroke-width="1.2"/></svg>
<svg class="a" style="left:249.5px;top:703.5px" width="13" height="11.5" viewBox="0 0 14 12"><path d="M0.5 1.6Q0.5 0.6 1.5 0.6H5L6.4 2.4H12.5Q13.5 2.4 13.5 3.4V10.4Q13.5 11.4 12.5 11.4H1.5Q0.5 11.4 0.5 10.4Z" fill="#d2d2d2"/></svg>
<div class="t" style="left:265.7px;top:701.5px;font-size:12.5px;letter-spacing:0.323px;">Materials</div>
<div class="a" style="left:248px;top:718.5px;width:15.5px;height:15px;background:#1e1e1e"></div>
<div class="t" style="left:265.7px;top:717.5px;font-size:12.5px;letter-spacing:-0.053px;">TEX_FryingPan</div>
<div class="a" style="left:248px;top:734.5px;width:15.5px;height:15px;background:#262626"></div><div class="a" style="left:255px;top:738.5px;width:2.4px;height:5px;background:#080808"></div>
<div class="t" style="left:265.7px;top:733.5px;font-size:12.5px;letter-spacing:-0.074px;">TEX_FryingPan_Mask</div>
<div class="a" style="left:248px;top:750.5px;width:15.5px;height:15px;background:radial-gradient(circle at 50% 50%,#fff 0,#e8e8e8 16%,#3a3a3a 40%,#0c0c0c 62%)"></div>
<div class="t" style="left:265.7px;top:749.5px;font-size:12.5px;letter-spacing:0.002px;">TEX_FryingPan_MatCap</div>
<div class="a" style="left:233.4px;top:988.6px;width:955px;height:21.2px;background:#414141"></div>
<div class="a" style="left:1123px;top:999px;width:51px;height:2px;background:#5e5e5e"></div>
<div class="a" style="left:1117.5px;top:994.5px;width:10.5px;height:10.5px;border-radius:50%;background:#999"></div>
<div class="a" style="left:0;top:1009px;width:1920px;height:24px;background:#191919"></div>
<svg class="a" style="left:1819.2px;top:1014px" width="16" height="16" viewBox="0 0 16 16"><g fill="#c4c4c4"><ellipse cx="8" cy="8.8" rx="4" ry="5.2"/><circle cx="8" cy="3.2" r="2.2"/></g><path d="M1.4 5.4 4.6 7M1 9.4H4M1.6 13.6 4.6 11.4M14.6 5.4 11.4 7M15 9.4H12M14.4 13.6 11.4 11.4" stroke="#c4c4c4" stroke-width="1.1" fill="none"/><path d="M2.6 1.2 14 14.6" stroke="#191919" stroke-width="1.9"/><path d="M3.2 1.4 13.6 14.4" stroke="#d0d0d0" stroke-width="1.1"/></svg>
<svg class="a" style="left:1845.3px;top:1014px" width="16" height="16" viewBox="0 0 16 16"><g fill="#c4c4c4"><ellipse cx="8" cy="3.6" rx="5.6" ry="2.4"/><path d="M2.4 5.6Q8 8.8 13.6 5.6V8.4Q8 11.6 2.4 8.4Z M2.4 10Q8 13.2 13.6 10V12.6Q8 15.8 2.4 12.6Z"/></g><path d="M2.6 1.2 14 14.6" stroke="#191919" stroke-width="1.9"/><path d="M3.2 1.4 13.6 14.4" stroke="#d0d0d0" stroke-width="1.1"/></svg>
<svg class="a" style="left:1872px;top:1014px" width="16" height="16" viewBox="0 0 16 16"><g fill="none" stroke="#c4c4c4" stroke-width="1.7"><path d="M2.4 9.4A5.8 5.8 0 0 1 12 3.6"/><path d="M13.6 6.6A5.8 5.8 0 0 1 4 12.4"/></g><path d="M10.4 0.8 14.4 3.4 10.6 5.8Z M5.6 15.2 1.6 12.6 5.4 10.2Z" fill="#c4c4c4"/><path d="M2.6 1.2 14 14.6" stroke="#191919" stroke-width="1.9"/><path d="M3.2 1.4 13.6 14.4" stroke="#d0d0d0" stroke-width="1.1"/></svg>
<svg class="a" style="left:1897.6px;top:1013.8px" width="17" height="17" viewBox="0 0 17 17"><circle cx="8.5" cy="8.5" r="7" fill="none" stroke="#b4b4b4" stroke-width="1.7"/><path d="M5.4 8.6 7.6 10.8 11.6 6.4" fill="none" stroke="#d4d4d4" stroke-width="1.9"/></svg>
</div>
</body>
</html>
